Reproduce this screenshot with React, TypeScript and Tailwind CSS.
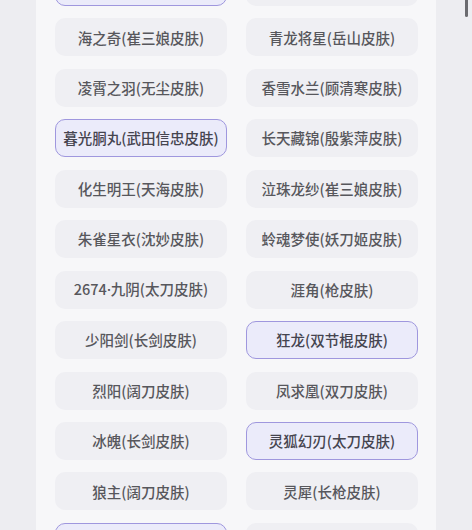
import React from 'react';

type Skin = { name: string; selected?: boolean };

const skins: Skin[] = [
  { name: '天下第一(武器皮肤)', selected: true },
  { name: '紫电青霜(长剑皮肤)' },
  { name: '海之奇(崔三娘皮肤)' },
  { name: '青龙将星(岳山皮肤)' },
  { name: '凌霄之羽(无尘皮肤)' },
  { name: '香雪水兰(顾清寒皮肤)' },
  { name: '暮光胴丸(武田信忠皮肤)', selected: true },
  { name: '长天藏锦(殷紫萍皮肤)' },
  { name: '化生明王(天海皮肤)' },
  { name: '泣珠龙纱(崔三娘皮肤)' },
  { name: '朱雀星衣(沈妙皮肤)' },
  { name: '蛉魂梦使(妖刀姬皮肤)' },
  { name: '2674·九阴(太刀皮肤)' },
  { name: '涯角(枪皮肤)' },
  { name: '少阳剑(长剑皮肤)' },
  { name: '狂龙(双节棍皮肤)', selected: true },
  { name: '烈阳(阔刀皮肤)' },
  { name: '凤求凰(双刀皮肤)' },
  { name: '冰魄(长剑皮肤)' },
  { name: '灵狐幻刃(太刀皮肤)', selected: true },
  { name: '狼主(阔刀皮肤)' },
  { name: '灵犀(长枪皮肤)' },
  { name: '残影(双刀皮肤)', selected: true },
  { name: '星河(长剑皮肤)' },
];

// the middle dot renders full width in the CJK font, so give it a latin one
function renderName(name: string) {
  const parts = name.split('·');
  if (parts.length === 1) return name;
  return (
    <>
      {parts[0]}
      <span style={{ fontFamily: '"Noto Sans", sans-serif' }}>·</span>
      {parts[1]}
    </>
  );
}

function SkinButton({ skin }: { skin: Skin }) {
  return (
    <button
      className={
        skin.selected
          ? 'h-[38px] w-full rounded-[10px] border-[1.5px] border-[#9f97de] bg-[#ebebfa] text-[14.5px] font-medium text-[#45444f]'
          : 'h-[38px] w-full rounded-[10px] border-[1.5px] border-transparent bg-[#efeff3] text-[14.5px] font-medium text-[#57575c]'
      }
    >
      {renderName(skin.name)}
    </button>
  );
}

export default function App() {
  return (
    <div
      className="relative h-[530px] w-[472px] overflow-hidden bg-[#ededf1]"
      style={{ fontFamily: '"Noto Sans CJK SC", "Noto Sans", sans-serif' }}
    >
      <div className="ml-[36px] h-full w-[400px] overflow-hidden bg-[#f7f7f9] pl-[19px] pr-[18px]">
        {/* list is scrolled down a bit */}
        <div className="-mt-[32px] grid grid-cols-2 gap-x-[19px] gap-y-[12.45px]">
          {skins.map((s, i) => (
            <SkinButton key={i} skin={s} />
          ))}
        </div>
      </div>

      {/* scrollbar thumb */}
      <div className="absolute right-[4px] top-0 h-[17px] w-[3px] rounded-b-full bg-[#6b6b70]" />
    </div>
  );
}
